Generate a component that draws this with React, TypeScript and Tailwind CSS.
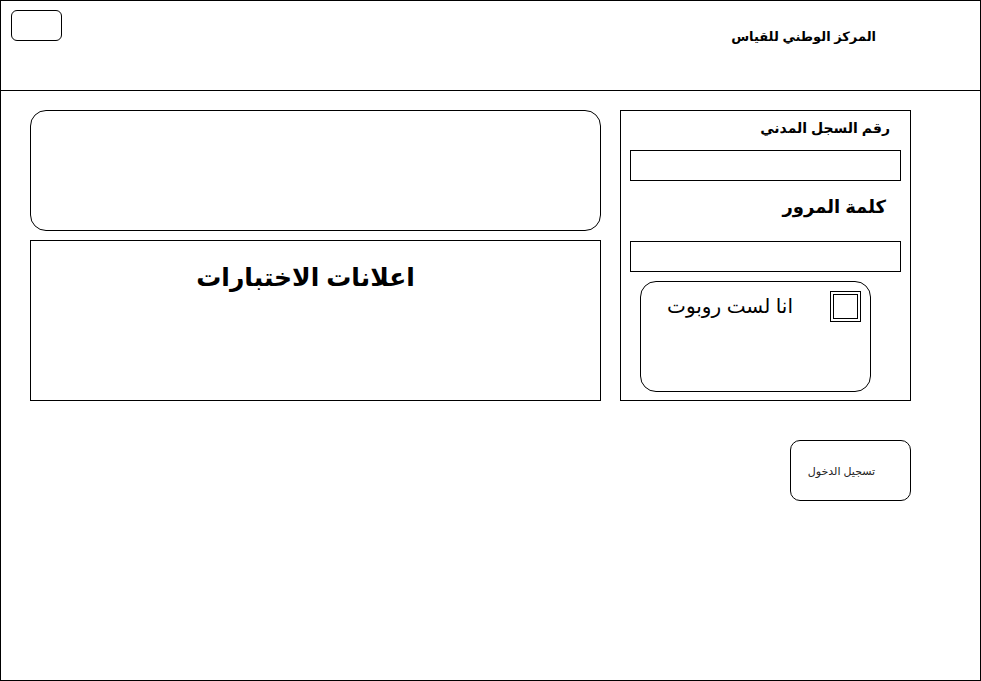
const App = () => {
  return (
    <div className="w-[981px] h-[681px] bg-white text-black font-['Liberation_Sans','DejaVu_Sans',sans-serif]">
      <div className="w-[981px] h-[681px] border border-black flex flex-col">
        {/* header */}
        <div className="h-[90px] border-b border-black flex items-start justify-between pl-[10px] pr-[104px] pt-[9px] shrink-0">
          <div className="w-[51px] h-[31px] border border-black rounded-[6px]"></div>
          <div dir="rtl" className="text-[13px] font-bold mt-[17px]">المركز الوطني للقياس</div>
        </div>

        {/* body */}
        <div className="flex pl-[29px] pt-[19px]">
          <div className="w-[571px] flex flex-col gap-[9px]">
            <div className="h-[121px] border border-black rounded-[16px]"></div>
            <div className="h-[161px] border border-black flex justify-center pt-[19px] pr-[20px]">
              <div dir="rtl" className="text-[25px] font-bold leading-[34px]">اعلانات الاختبارات</div>
            </div>
          </div>

          <div className="ml-[19px] w-[291px] flex flex-col">
            <div className="h-[291px] border border-black flex flex-col px-[9px]">
              <div dir="rtl" className="text-[14px] font-bold pr-[11px] mt-[6px] leading-[22px]">رقم السجل المدني</div>
              <div className="h-[31px] border border-black mt-[11px]"></div>
              <div dir="rtl" className="text-[18px] font-bold pr-[15px] mt-[14px] leading-[24px]">كلمة المرور</div>
              <div className="h-[31px] border border-black mt-[22px]"></div>
              <div className="ml-[10px] w-[231px] h-[111px] border border-black rounded-[16px] mt-[9px] flex justify-end items-start pt-[9px] pr-[9px]">
                <div dir="rtl" className="text-[20px] mt-[1px] mr-[37px] leading-[28px]">انا لست روبوت</div>
                <div className="w-[31px] h-[31px] border-[4px] border-double border-black"></div>
              </div>
            </div>
            <button className="self-end mt-[39px] w-[121px] h-[61px] border border-black rounded-[10px] bg-white text-[11px] text-[#222] flex items-center justify-center pr-[18px] pt-[2px]">
              <span dir="rtl">تسجيل الدخول</span>
            </button>
          </div>
        </div>
      </div>
    </div>
  )
}

export default App
